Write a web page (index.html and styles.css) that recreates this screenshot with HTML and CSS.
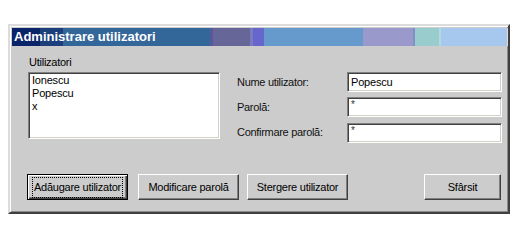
FILE: index.html
```html
<!DOCTYPE html>
<html lang="ro">
<head>
<meta charset="utf-8">
<title>Administrare utilizatori</title>
<link rel="stylesheet" href="styles.css">
</head>
<body>
<div class="dialog">
  <div class="titlebar"><span class="title">Administrare utilizatori</span></div>
  <div class="body">
    <div class="main">
      <div class="users">
        <div class="caption">Utilizatori</div>
        <div class="listbox">
          <div class="item">Ionescu</div>
          <div class="item">Popescu</div>
          <div class="item">x</div>
        </div>
      </div>
      <div class="form">
        <div class="label">Nume utilizator:</div>
        <div class="field field-text">Popescu</div>
        <div class="label">Parolă:</div>
        <div class="field field-pass">*</div>
        <div class="label">Confirmare parolă:</div>
        <div class="field field-pass">*</div>
      </div>
    </div>
    <div class="buttons">
      <button class="btn btn-default" type="button"><span class="focus">Adăugare utilizator</span></button>
      <button class="btn btn-mod" type="button">Modificare parolă</button>
      <button class="btn btn-del" type="button">Stergere utilizator</button>
      <button class="btn btn-end" type="button">Sfârsit</button>
    </div>
  </div>
</div>
</body>
</html>
```
FILE: styles.css
```css
html, body {
  margin: 0;
  padding: 0;
  background: #ffffff;
}
body {
  font-family: "Liberation Sans", Arial, sans-serif;
  font-size: 11px;
  color: #000;
}
.dialog {
  box-sizing: border-box;
  margin: 24px 0 0 8px;
  width: 502px;
  height: 190px;
  background: #cccccc;
  border: 2px solid;
  border-color: #dcdcdc #404040 #404040 #dcdcdc;
  box-shadow: inset 1px 1px 0 #ffffff, inset -1px -1px 0 #8a8a8a;
  padding: 2px 0 0 2px;
  display: flex;
  flex-direction: column;
}
.titlebar {
  height: 18px;
  display: flex;
  align-items: center;
  padding-left: 2px;
  background: linear-gradient(to right,
    #0a246a 0, #0a246a 28px,
    #1c3f7c 28px, #1c3f7c 51px,
    #336699 51px, #336699 198px,
    #58589a 198px, #58589a 201px,
    #666699 201px, #666699 238px,
    #7a7ac0 238px, #7a7ac0 241px,
    #6666cc 241px, #6666cc 252px,
    #6699cc 252px, #6699cc 351px,
    #9999cc 351px, #9999cc 401px,
    #8090c4 401px, #8090c4 403px,
    #99cccc 403px, #99cccc 427px,
    #b4d8e0 427px, #b4d8e0 429px,
    #a6c8ee 429px, #a6c8ee 495px,
    #ecd8cc 495px, #ecd8cc 496px);
}
.title {
  color: #ffffff;
  font-weight: bold;
  font-size: 13px;
  line-height: 16px;
}
.body {
  flex: 1;
  padding: 10px 6px 0 16px;
  display: flex;
  flex-direction: column;
}
.main {
  display: flex;
  gap: 17px;
  align-items: flex-start;
}
.users {
  width: 192px;
  display: flex;
  flex-direction: column;
}
.caption {
  line-height: 13px;
  height: 13px;
  margin-bottom: 3px;
  padding-left: 1px;
  letter-spacing: -0.25px;
}
.listbox {
  box-sizing: border-box;
  height: 67px;
  background: #ffffff;
  border: 1px solid;
  border-color: #808080 #ffffff #ffffff #808080;
  box-shadow: inset 1px 1px 0 #404040, inset -1px -1px 0 #d4d0c8;
  padding: 1px 3px;
}
.item {
  line-height: 13px;
  letter-spacing: -0.2px;
}
.form {
  flex: 1;
  padding-top: 16px;
  display: grid;
  grid-template-columns: 110px 155px;
  grid-auto-rows: 20px;
  row-gap: 5px;
  align-items: center;
}
.label {
  letter-spacing: -0.3px;
  color: #111;
}
.field {
  box-sizing: border-box;
  height: 20px;
  background: #ffffff;
  border: 1px solid;
  border-color: #808080 #ffffff #ffffff #808080;
  box-shadow: inset 1px 1px 0 #404040, inset -1px -1px 0 #d4d0c8;
  padding: 0 3px;
}
.field-text {
  line-height: 16px;
  padding-top: 1px;
  letter-spacing: -0.2px;
}
.field-pass {
  font-size: 10px;
  line-height: 12px;
  padding-top: 1px;
  color: #333;
}
.form .field:nth-child(6) {
  margin-top: 1px;
}
.buttons {
  margin-top: 32px;
  margin-left: -1px;
  display: flex;
  align-items: flex-start;
}
.btn {
  box-sizing: border-box;
  height: 26px;
  margin: 0;
  padding: 0;
  font-family: "Liberation Sans", Arial, sans-serif;
  font-size: 11px;
  letter-spacing: -0.25px;
  color: #000;
  background: #cccccc;
  border: 1px solid;
  border-color: #ffffff #404040 #404040 #ffffff;
  box-shadow: inset -1px -1px 0 #808080;
  display: flex;
  align-items: center;
  justify-content: center;
}
.btn-default {
  width: 101px;
  border: 1px solid #000;
  box-shadow: inset 1px 1px 0 #ffffff, inset -1px -1px 0 #404040, inset -2px -2px 0 #808080;
}
.focus {
  display: block;
  border: 1px dotted #000;
  padding: 3px 1px 4px 1px;
  line-height: 12px;
}
.btn-mod {
  width: 101px;
  margin-left: 10px;
}
.btn-del {
  width: 101px;
  margin-left: 8px;
}
.btn-end {
  width: 77px;
  margin-left: auto;
  margin-right: 1px;
}
```
